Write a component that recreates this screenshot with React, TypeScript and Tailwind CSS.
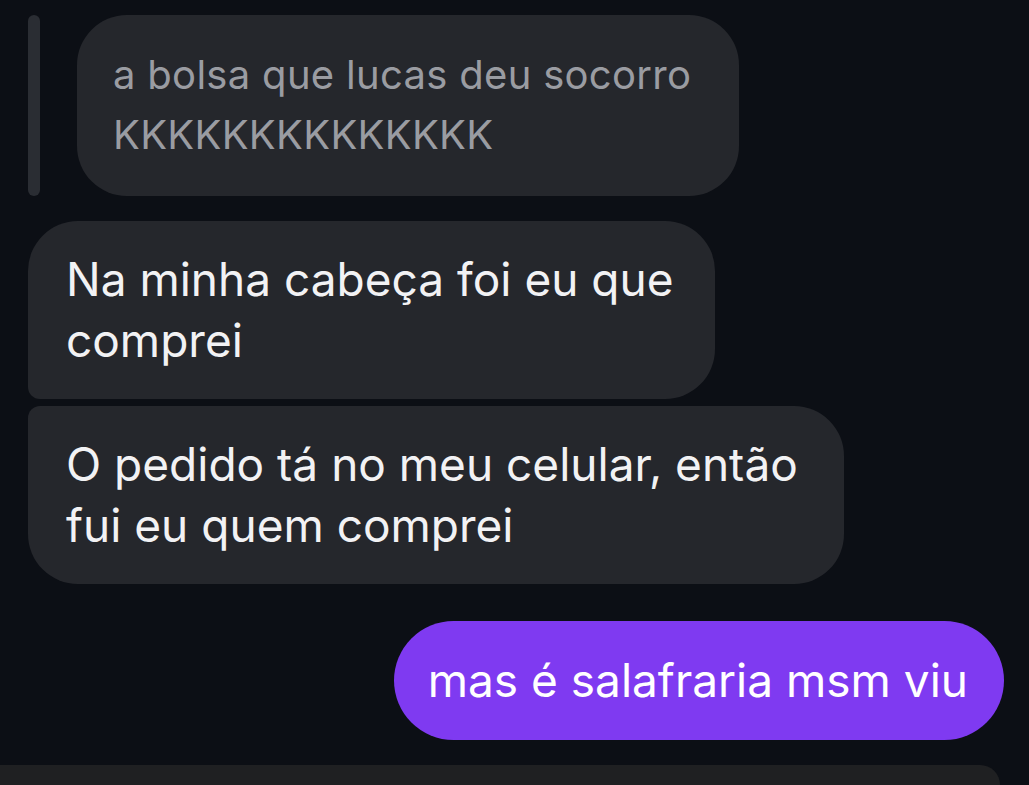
const font = { fontFamily: "Inter, 'Noto Sans', sans-serif" };

const App = () => {
  return (
    <div
      className="w-[1029px] h-[785px] overflow-hidden bg-[#0c0f15] flex flex-col"
      style={font}
    >
      <div className="flex-1 flex flex-col px-[28px] pt-[15px]">
        {/* replied-to message */}
        <div className="flex items-stretch gap-[37px]">
          <div className="w-[12px] rounded-full bg-[#2a2d33]" />
          <div className="rounded-[50px] bg-[#25272c] pl-[36px] pr-[48px] pt-[30px] pb-[31px] text-[40px] leading-[60px] tracking-[0.3px] text-[#9a9ca2] whitespace-nowrap">
            a bolsa que lucas deu socorro
            <br />
            KKKKKKKKKKKKKK
          </div>
        </div>

        {/* incoming messages */}
        <div className="mt-[25px] flex flex-col items-start gap-[7px]">
          <div className="rounded-tl-[50px] rounded-tr-[50px] rounded-br-[50px] rounded-bl-[12px] bg-[#25272c] pl-[38px] pr-[41px] py-[28px] text-[46px] leading-[61px] text-[#f2f2f4] whitespace-nowrap">
            Na minha cabeça foi eu que
            <br />
            comprei
          </div>
          <div className="rounded-tl-[12px] rounded-tr-[50px] rounded-br-[50px] rounded-bl-[50px] bg-[#25272c] pl-[38px] pr-[46px] py-[28px] text-[46px] leading-[61px] text-[#f2f2f4] whitespace-nowrap">
            O pedido tá no meu celular, então
            <br />
            fui eu quem comprei
          </div>
        </div>

        {/* outgoing message */}
        <div className="mt-[37px] flex justify-end">
          <div className="-mr-[3px] rounded-full bg-[#7f3af1] pl-[34px] pr-[36px] py-[29px] text-[46px] leading-[61px] text-white whitespace-nowrap">
            mas é salafraria msm viu
          </div>
        </div>
      </div>

      {/* composer */}
      <div className="h-[20px] w-[1000px] rounded-tr-[56px] bg-[#1f2022]" />
    </div>
  );
};

export default App;
